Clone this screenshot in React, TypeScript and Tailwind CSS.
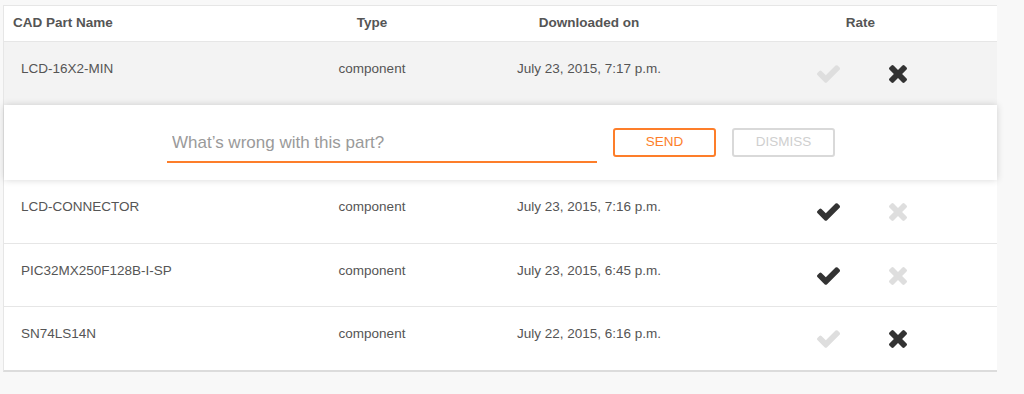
import { useState } from "react"

type Part = {
  name: string
  type: string
  date: string
  rating: "up" | "down"
}

const parts: Part[] = [
  { name: "LCD-16X2-MIN", type: "component", date: "July 23, 2015, 7:17 p.m.", rating: "down" },
  { name: "LCD-CONNECTOR", type: "component", date: "July 23, 2015, 7:16 p.m.", rating: "up" },
  { name: "PIC32MX250F128B-I-SP", type: "component", date: "July 23, 2015, 6:45 p.m.", rating: "up" },
  { name: "SN74LS14N", type: "component", date: "July 22, 2015, 6:16 p.m.", rating: "down" },
]

function CheckIcon({ className }: { className?: string }) {
  return (
    <svg viewBox="121 334 1550 1188" className={className} fill="currentColor">
      <path d="M1671 566q0 40-28 68l-724 724-136 136q-28 28-68 28t-68-28l-136-136-362-362q-28-28-28-68t28-68l136-136q28-28 68-28t68 28l294 295 656-657q28-28 68-28t68 28l136 136q28 28 28 68z" />
    </svg>
  )
}

function TimesIcon({ className }: { className?: string }) {
  return (
    <svg viewBox="110 366 1188 1188" className={className} fill="currentColor">
      <path d="M1298 1322q0 40-28 68l-136 136q-28 28-68 28t-68-28l-294-294-294 294q-28 28-68 28t-68-28l-136-136q-28-28-28-68t28-68l294-294-294-294q-28-28-28-68t28-68l136-136q28-28 68-28t68 28l294 294 294-294q28-28 68-28t68 28l136 136q28 28 28 68t-28 68l-294 294 294 294q28 28 28 68z" />
    </svg>
  )
}

function PartRow({ part, className }: { part: Part; className: string }) {
  return (
    <div className={`grid grid-cols-[286px_164px_270px_1fr] text-[13.5px] leading-[16px] text-[#555] ${className}`}>
      <div className="pl-[17px] pt-[19px]">{part.name}</div>
      <div className="pt-[19px] text-center">{part.type}</div>
      <div className="pt-[19px] text-center">{part.date}</div>
      {/* Rate */}
      <div className="flex justify-center gap-[20px] pl-[5px] pt-[23px]">
        <div className="flex h-[18px] w-[50px] items-center justify-center">
          <CheckIcon className={`h-[18px] w-[23px] ${part.rating === "up" ? "text-[#333]" : "text-[#dedede]"}`} />
        </div>
        <div className="flex h-[18px] w-[50px] items-center justify-center">
          <TimesIcon className={`h-[18px] w-[18px] ${part.rating === "down" ? "text-[#333]" : "text-[#dedede]"}`} />
        </div>
      </div>
    </div>
  )
}

export default function App() {
  const [reason, setReason] = useState("")

  return (
    <div className="h-[394px] w-[1024px] overflow-hidden bg-[#f8f8f8] pt-[5px] pl-[3px] font-['Liberation_Sans',Arial,sans-serif]">
      <div className="w-[994px] border-t border-l border-b-2 border-[#e6e6e6] border-b-[#dcdcdc] bg-white">
        {/* Header */}
        <div className="grid h-[36px] grid-cols-[286px_164px_270px_1fr] border-b border-[#e6e6e6] pt-[9px] text-[13.5px] font-bold leading-[16px] text-[#555]">
          <div className="pl-[9px]">CAD Part Name</div>
          <div className="text-center">Type</div>
          <div className="text-center">Downloaded on</div>
          <div className="text-center">Rate</div>
        </div>

        <PartRow part={parts[0]} className="h-[63px] bg-[#f3f3f3]" />

        {/* Report dialog */}
        <div className="relative z-10 flex h-[75px] items-center bg-white pl-[163px] shadow-[0_0_7px_rgba(0,0,0,0.16)]">
          <input
            value={reason}
            onChange={(e) => setReason(e.target.value)}
            placeholder="What’s wrong with this part?"
            className="h-[40px] w-[430px] border-b-2 border-[#fd7e2a] bg-transparent pt-[2px] pl-[5px] text-[17px] text-[#555] outline-none placeholder:text-[#9a9a9a]"
          />
          <button className="ml-[16px] h-[29px] w-[103px] rounded-[3px] border-2 border-[#fd7e2a] text-[13.5px] text-[#fd7e2a]">
            SEND
          </button>
          <button className="ml-[16px] h-[29px] w-[103px] rounded-[3px] border-2 border-[#d9d9d9] text-[13.5px] text-[#cfcfcf]">
            DISMISS
          </button>
        </div>

        <PartRow part={parts[1]} className="h-[64px] border-b border-[#e6e6e6]" />
        <PartRow part={parts[2]} className="h-[63px] border-b border-[#e6e6e6]" />
        <PartRow part={parts[3]} className="h-[63px]" />
      </div>
    </div>
  )
}
